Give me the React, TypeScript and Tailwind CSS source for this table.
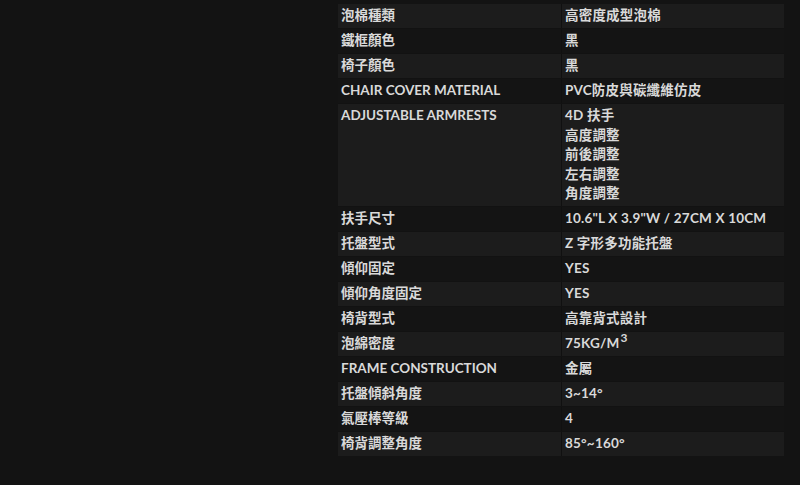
import React from "react";

type Row = { k: string; v: React.ReactNode };

const rows: Row[] = [
  { k: "泡棉種類", v: "高密度成型泡棉" },
  { k: "鐵框顏色", v: "黑" },
  { k: "椅子顏色", v: "黑" },
  { k: "CHAIR COVER MATERIAL", v: "PVC防皮與碳纖維仿皮" },
  {
    k: "ADJUSTABLE ARMRESTS",
    v: (
      <>
        <div>4D 扶手</div>
        <div>高度調整</div>
        <div>前後調整</div>
        <div>左右調整</div>
        <div>角度調整</div>
      </>
    ),
  },
  { k: "扶手尺寸", v: "10.6\"L X 3.9\"W / 27CM X 10CM" },
  { k: "托盤型式", v: "Z 字形多功能托盤" },
  { k: "傾仰固定", v: "YES" },
  { k: "傾仰角度固定", v: "YES" },
  { k: "椅背型式", v: "高靠背式設計" },
  {
    k: "泡綿密度",
    v: (
      <>
        75KG/M<sup className="text-[12px] leading-none relative -top-[6px] ml-[1px]">3</sup>
      </>
    ),
  },
  { k: "FRAME CONSTRUCTION", v: "金屬" },
  { k: "托盤傾斜角度", v: "3~14°" },
  { k: "氣壓棒等級", v: "4" },
  { k: "椅背調整角度", v: "85°~160°" },
];

export default function App() {
  return (
    <div
      className="w-[800px] h-[485px] bg-[#131313] overflow-hidden"
      style={{ fontFamily: '"Lato", "Noto Sans CJK TC", sans-serif' }}
    >
      <div className="ml-[338px] mt-[4px] w-[446px] flex flex-col text-[13.5px] leading-[19.5px] font-bold text-[#d9d9d9]">
        {rows.map((r, i) => (
          <div
            key={i}
            className={`flex ${i % 2 === 0 ? "bg-[#1c1c1c]" : "bg-[#141414]"} ${
              i > 0 ? "border-t border-[#121212]" : ""
            }`}
          >
            <div className="w-[223px] px-[3px] py-[2.25px] whitespace-nowrap">{r.k}</div>
            <div className="w-[1px] bg-[#101010]" />
            <div className="flex-1 px-[3px] py-[2.25px] whitespace-nowrap tracking-[0.2px]">{r.v}</div>
          </div>
        ))}
      </div>
    </div>
  );
}
